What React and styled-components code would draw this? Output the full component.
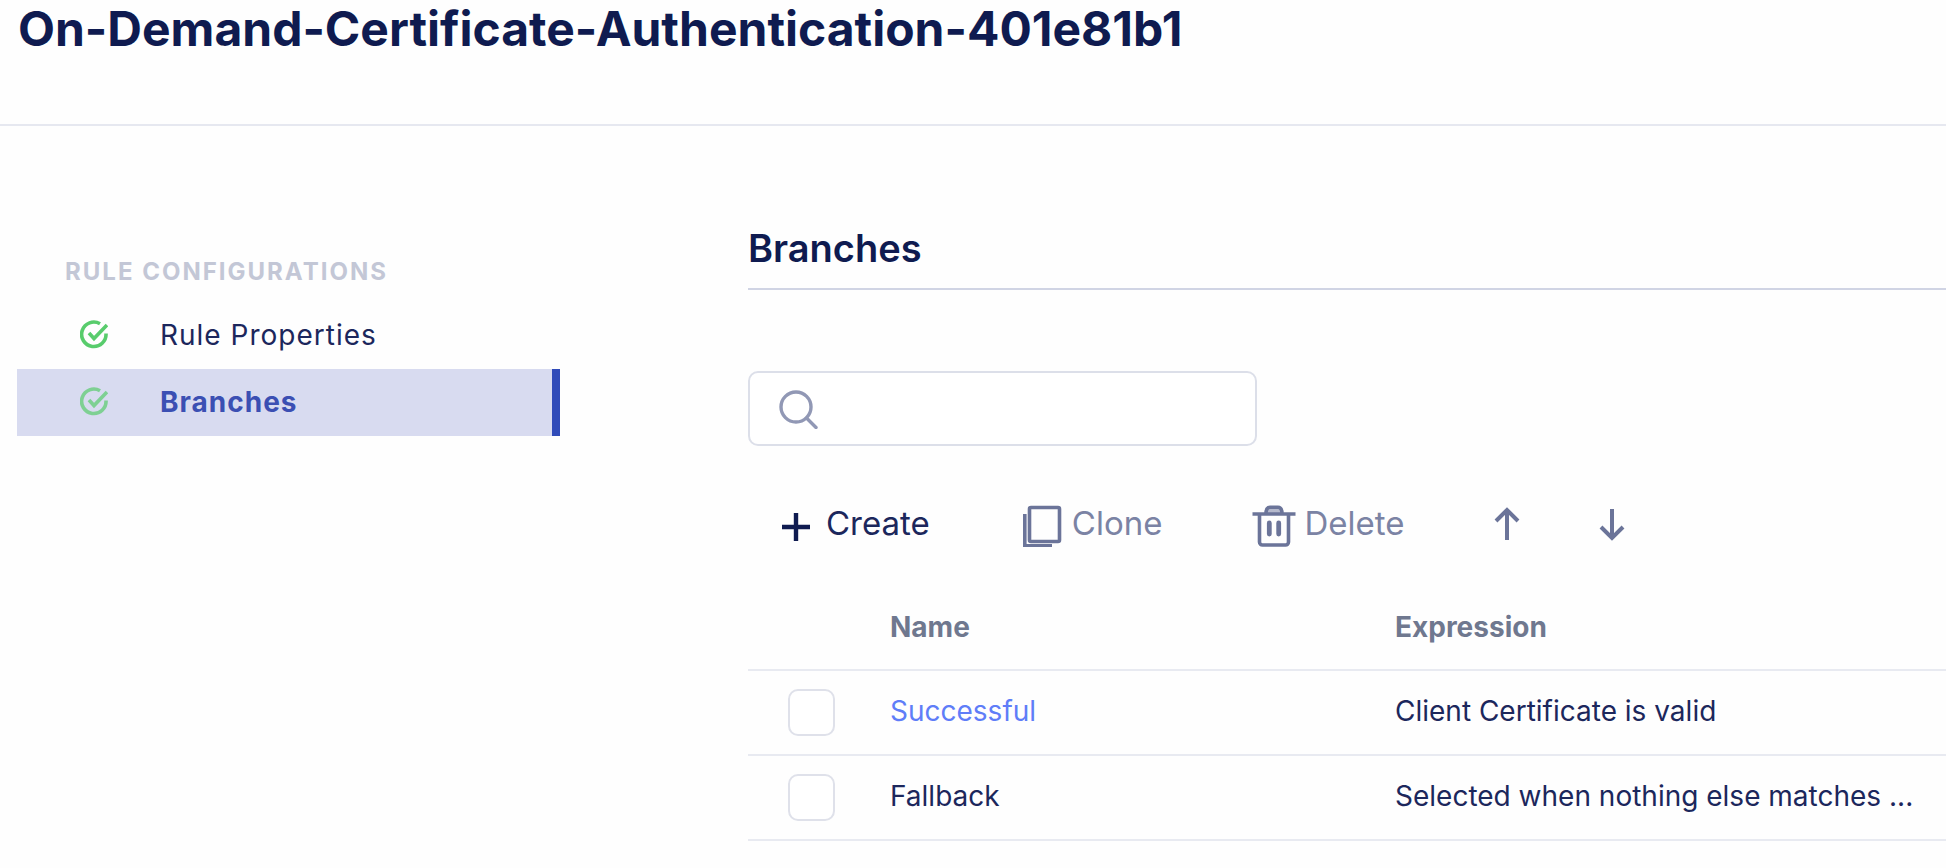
import React, { useState } from "react";
import styled, { createGlobalStyle } from "styled-components";

const navy = "#0f1b50";
const ink = "#1c275c";
const slate = "#6b7499";

const GlobalStyle = createGlobalStyle`
  *, *::before, *::after { box-sizing: border-box; }
  body {
    margin: 0;
    background: #fefefe;
    color: ${navy};
    font-family: Inter, "Liberation Sans", sans-serif;
    font-size: 28px;
    line-height: 34px;
  }
`;

const Header = styled.header`
  padding: 0 18px 67px;
  border-bottom: 2px solid #e6e8f0;
`;

const PageTitle = styled.h1`
  margin: 0;
  font-size: 48px;
  line-height: 57px;
  font-weight: 700;
`;

const Body = styled.div`
  display: flex;
  align-items: flex-start;
  gap: 188px;
  padding-left: 17px;
`;

const Sidebar = styled.nav`
  flex: 0 0 543px;
  padding-top: 132px;
`;

const SidebarTitle = styled.h2`
  margin: 0 0 16px;
  padding-left: 48px;
  color: #c3c7d6;
  font-size: 24px;
  line-height: 28px;
  font-weight: 700;
  letter-spacing: 2px;
  text-transform: uppercase;
`;

const NavItem = styled.a`
  display: flex;
  align-items: center;
  gap: 52px;
  height: 67px;
  padding-left: 63px;
  padding-bottom: 2px;
  border-right: 8px solid ${(p) => (p.$active ? "#304bb9" : "transparent")};
  background: ${(p) => (p.$active ? "#d8dbf0" : "transparent")};
  color: ${(p) => (p.$active ? "#3b4fb3" : ink)};
  font-weight: ${(p) => (p.$active ? 700 : 400)};
  letter-spacing: 1px;
  text-decoration: none;

  svg {
    opacity: ${(p) => (p.$active ? 0.7 : 1)};
  }
`;

const Main = styled.main`
  flex: 1;
  min-width: 0;
  padding-top: 100px;
`;

const SectionTitle = styled.h2`
  margin: 0 0 81px;
  padding-bottom: 18px;
  border-bottom: 2px solid #d0d4e4;
  font-size: 38px;
  line-height: 44px;
  font-weight: 600;
`;

const SearchBox = styled.label`
  display: flex;
  align-items: center;
  gap: 16px;
  width: 509px;
  max-width: 100%;
  height: 75px;
  padding: 0 28px;
  border: 2px solid #dcdfe9;
  border-radius: 10px;
  background: #fff;
`;

const SearchInput = styled.input`
  flex: 1;
  min-width: 0;
  border: 0;
  outline: 0;
  background: transparent;
  color: inherit;
  font: inherit;
`;

const Toolbar = styled.div`
  display: flex;
  align-items: center;
  gap: 90px;
  margin-top: 56px;
  padding-left: 26px;
`;

const MoveButtons = styled.div`
  display: flex;
  gap: 79px;
`;

const ToolButton = styled.button`
  display: flex;
  align-items: center;
  gap: 8px;
  height: 48px;
  padding: 0;
  border: 0;
  background: none;
  color: ${(p) => (p.$muted ? slate : navy)};
  font: inherit;
  font-size: 33px;
  line-height: 40px;

  span {
    padding-bottom: 6px;
    color: ${(p) => (p.$muted ? "#7b83a4" : ink)};
  }
`;

const BranchTable = styled.table`
  width: 100%;
  margin-top: 50px;
  border-collapse: collapse;
  table-layout: fixed;
`;

const HeadCell = styled.th`
  width: ${(p) => p.$width || "auto"};
  height: 70px;
  padding: 0 0 16px;
  border-bottom: 2px solid #e8eaf1;
  color: #6f788f;
  font-weight: 700;
  text-align: left;
`;

const Cell = styled.td`
  height: 85px;
  padding: 0 0 4px;
  border-bottom: 2px solid #e8eaf1;
  color: ${ink};
  white-space: nowrap;
`;

const CheckCell = styled(Cell)`
  padding: 0 0 0 40px;
`;

const Checkbox = styled.input`
  display: block;
  appearance: none;
  width: 47px;
  height: 47px;
  margin: 0;
  border: 2px solid #dfe1ea;
  border-radius: 10px;
  background: #fff;

  &:checked {
    background: #304bb9;
  }
`;

const BranchLink = styled.a`
  color: #5f7df8;
  text-decoration: none;
`;

const CheckCircle = () => (
  <svg width="28" height="30" viewBox="0 0 28 30" fill="none" stroke="#58cc6c" strokeWidth="3.6" aria-hidden="true">
    <path d="M20 3.8A12.2 12.2 0 1 0 26 13.5" />
    <path d="M9 13l5 5.5L27 5" />
  </svg>
);

const SearchIcon = () => (
  <svg width="40" height="40" viewBox="0 0 40 40" fill="none" stroke="#9198b5" strokeWidth="3.4" strokeLinecap="round" aria-hidden="true">
    <circle cx="18" cy="18" r="15" />
    <path d="M28.5 29L38 38.5" />
  </svg>
);

const PlusIcon = () => (
  <svg width="44" height="42" viewBox="0 0 44 42" fill="none" stroke="currentColor" strokeWidth="4.4" aria-hidden="true">
    <path d="M22 8v28M8 22h28" />
  </svg>
);

const CloneIcon = () => (
  <svg width="44" height="42" viewBox="0 0 44 42" fill="none" stroke="currentColor" strokeWidth="3.6" aria-hidden="true">
    <rect x="9.5" y="2.500" width="30" height="34" rx="1.5" />
    <path d="M4.800 9v31.700H32" />
  </svg>
);

const TrashIcon = () => (
  <svg width="44" height="42" viewBox="0 0 44 42" fill="none" stroke="currentColor" strokeWidth="3.6" aria-hidden="true">
    <path d="M0.5 9h43" />
    <path d="M14 9c0-5 1.5-6.8 4-6.8h8c2.5 0 4 1.800 4 6.800" fill="currentColor" fillOpacity="0.5" />
    <path d="M7.500 10v27a3 3 0 0 0 3 3h23a3 3 0 0 0 3-3V10" />
    <path d="M17.300 18v11M26.700 18v11" strokeWidth="4.8" strokeLinecap="round" />
  </svg>
);

const ArrowIcon = ({ down }) => (
  <svg width="26" height="42" viewBox="0 0 26 42" fill="none" stroke="currentColor" strokeWidth="4" aria-hidden="true">
    <path d={down ? "M13 4v28M2 22l11 11l11-11" : "M13 35V6M2 16l11-11l11 11"} />
  </svg>
);

const branches = [
  { name: "Successful", expression: "Client Certificate is valid", linked: true },
  { name: "Fallback", expression: "Selected when nothing else matches ..." },
];

export default function App() {
  const [query, setQuery] = useState("");

  return (
    <>
      <GlobalStyle />
      <Header>
        <PageTitle>On-Demand-Certificate-Authentication-401e81b1</PageTitle>
      </Header>
      <Body>
        <Sidebar aria-label="Rule configurations">
          <SidebarTitle>Rule configurations</SidebarTitle>
          <NavItem href="#properties">
            <CheckCircle />
            Rule Properties
          </NavItem>
          <NavItem href="#branches" $active aria-current="page">
            <CheckCircle />
            Branches
          </NavItem>
        </Sidebar>
        <Main>
          <SectionTitle>Branches</SectionTitle>
          <SearchBox>
            <SearchIcon />
            <SearchInput
              type="search"
              aria-label="Search branches"
              value={query}
              onChange={(e) => setQuery(e.target.value)}
            />
          </SearchBox>
          <Toolbar>
            <ToolButton type="button">
              <PlusIcon />
              <span>Create</span>
            </ToolButton>
            <ToolButton type="button" $muted>
              <CloneIcon />
              <span>Clone</span>
            </ToolButton>
            <ToolButton type="button" $muted>
              <TrashIcon />
              <span>Delete</span>
            </ToolButton>
            <MoveButtons>
              <ToolButton type="button" $muted aria-label="Move up">
                <ArrowIcon />
              </ToolButton>
              <ToolButton type="button" $muted aria-label="Move down">
                <ArrowIcon down />
              </ToolButton>
            </MoveButtons>
          </Toolbar>
          <BranchTable>
            <thead>
              <tr>
                <HeadCell $width="142px" aria-label="Select" />
                <HeadCell $width="505px">Name</HeadCell>
                <HeadCell>Expression</HeadCell>
              </tr>
            </thead>
            <tbody>
              {branches.map((b) => (
                <tr key={b.name}>
                  <CheckCell>
                    <Checkbox type="checkbox" aria-label={`Select ${b.name}`} />
                  </CheckCell>
                  <Cell>
                    {b.linked ? <BranchLink href="#successful">{b.name}</BranchLink> : b.name}
                  </Cell>
                  <Cell>{b.expression}</Cell>
                </tr>
              ))}
            </tbody>
          </BranchTable>
        </Main>
      </Body>
    </>
  );
}
